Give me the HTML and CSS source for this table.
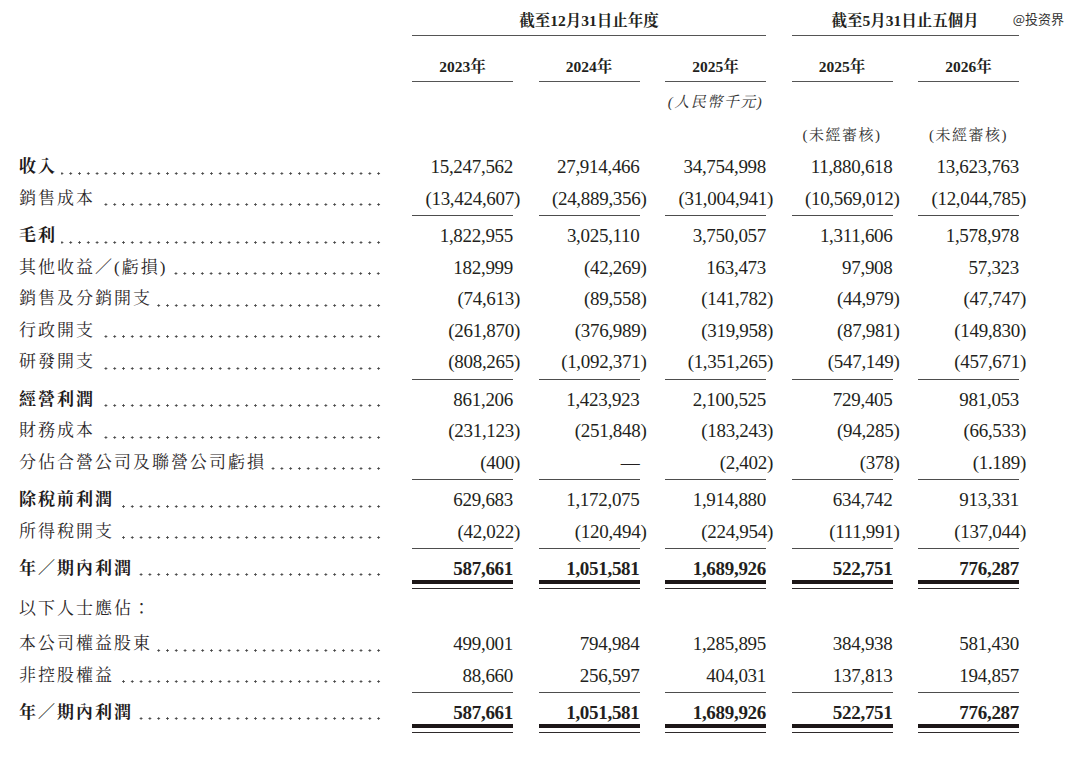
FILE: index.html
```html
<!DOCTYPE html>
<html lang="zh-Hant">
<head>
<meta charset="utf-8">
<title>綜合損益表</title>
<link rel="stylesheet" href="styles.css">
</head>
<body>
<div class="sheet">
  <div class="wm">@投资界</div>

  <div class="row hdr-a">
    <div></div>
    <div class="grp g1">截至12月31日止年度</div>
    <div class="grp g2">截至5月31日止五個月</div>
  </div>
  <div class="row hdr-b">
    <div></div>
    <div class="yr">2023年</div>
    <div class="yr">2024年</div>
    <div class="yr">2025年</div>
    <div class="yr">2025年</div>
    <div class="yr">2026年</div>
  </div>
  <div class="row hdr-c">
    <div></div><div></div><div></div>
    <div class="unit">(人民幣千元)</div>
    <div></div><div></div>
  </div>
  <div class="row hdr-d">
    <div></div><div></div><div></div><div></div>
    <div class="aud">(未經審核)</div>
    <div class="aud">(未經審核)</div>
  </div>

  <div class="body">
    <div class="row"><div class="lbl b"><span>收入</span><i class="dots"></i></div><div class="num">15,247,562</div><div class="num">27,914,466</div><div class="num">34,754,998</div><div class="num">11,880,618</div><div class="num">13,623,763</div></div>
    <div class="row"><div class="lbl"><span>銷售成本</span><i class="dots"></i></div><div class="num"><span class="neg">(13,424,607)</span></div><div class="num"><span class="neg">(24,889,356)</span></div><div class="num"><span class="neg">(31,004,941)</span></div><div class="num"><span class="neg">(10,569,012)</span></div><div class="num"><span class="neg">(12,044,785)</span></div></div>
    <div class="row rule"><div></div><div class="ln"></div><div class="ln"></div><div class="ln"></div><div class="ln"></div><div class="ln"></div></div>

    <div class="row"><div class="lbl b"><span>毛利</span><i class="dots"></i></div><div class="num">1,822,955</div><div class="num">3,025,110</div><div class="num">3,750,057</div><div class="num">1,311,606</div><div class="num">1,578,978</div></div>
    <div class="row"><div class="lbl"><span>其他收益／(虧損)</span><i class="dots"></i></div><div class="num">182,999</div><div class="num"><span class="neg">(42,269)</span></div><div class="num">163,473</div><div class="num">97,908</div><div class="num">57,323</div></div>
    <div class="row"><div class="lbl"><span>銷售及分銷開支</span><i class="dots"></i></div><div class="num"><span class="neg">(74,613)</span></div><div class="num"><span class="neg">(89,558)</span></div><div class="num"><span class="neg">(141,782)</span></div><div class="num"><span class="neg">(44,979)</span></div><div class="num"><span class="neg">(47,747)</span></div></div>
    <div class="row"><div class="lbl"><span>行政開支</span><i class="dots"></i></div><div class="num"><span class="neg">(261,870)</span></div><div class="num"><span class="neg">(376,989)</span></div><div class="num"><span class="neg">(319,958)</span></div><div class="num"><span class="neg">(87,981)</span></div><div class="num"><span class="neg">(149,830)</span></div></div>
    <div class="row"><div class="lbl"><span>研發開支</span><i class="dots"></i></div><div class="num"><span class="neg">(808,265)</span></div><div class="num"><span class="neg">(1,092,371)</span></div><div class="num"><span class="neg">(1,351,265)</span></div><div class="num"><span class="neg">(547,149)</span></div><div class="num"><span class="neg">(457,671)</span></div></div>
    <div class="row rule"><div></div><div class="ln"></div><div class="ln"></div><div class="ln"></div><div class="ln"></div><div class="ln"></div></div>

    <div class="row"><div class="lbl b"><span>經營利潤</span><i class="dots"></i></div><div class="num">861,206</div><div class="num">1,423,923</div><div class="num">2,100,525</div><div class="num">729,405</div><div class="num">981,053</div></div>
    <div class="row"><div class="lbl"><span>財務成本</span><i class="dots"></i></div><div class="num"><span class="neg">(231,123)</span></div><div class="num"><span class="neg">(251,848)</span></div><div class="num"><span class="neg">(183,243)</span></div><div class="num"><span class="neg">(94,285)</span></div><div class="num"><span class="neg">(66,533)</span></div></div>
    <div class="row"><div class="lbl"><span>分佔合營公司及聯營公司虧損</span><i class="dots"></i></div><div class="num"><span class="neg">(400)</span></div><div class="num">—</div><div class="num"><span class="neg">(2,402)</span></div><div class="num"><span class="neg">(378)</span></div><div class="num"><span class="neg">(1.189)</span></div></div>
    <div class="row rule"><div></div><div class="ln"></div><div class="ln"></div><div class="ln"></div><div class="ln"></div><div class="ln"></div></div>

    <div class="row"><div class="lbl b"><span>除稅前利潤</span><i class="dots"></i></div><div class="num">629,683</div><div class="num">1,172,075</div><div class="num">1,914,880</div><div class="num">634,742</div><div class="num">913,331</div></div>
    <div class="row"><div class="lbl"><span>所得稅開支</span><i class="dots"></i></div><div class="num"><span class="neg">(42,022)</span></div><div class="num"><span class="neg">(120,494)</span></div><div class="num"><span class="neg">(224,954)</span></div><div class="num"><span class="neg">(111,991)</span></div><div class="num"><span class="neg">(137,044)</span></div></div>
    <div class="row rule"><div></div><div class="ln"></div><div class="ln"></div><div class="ln"></div><div class="ln"></div><div class="ln"></div></div>

    <div class="row total"><div class="lbl b"><span>年／期內利潤</span><i class="dots"></i></div><div class="num">587,661</div><div class="num">1,051,581</div><div class="num">1,689,926</div><div class="num">522,751</div><div class="num">776,287</div></div>
    <div class="row dbl"><div></div><div class="dl"></div><div class="dl"></div><div class="dl"></div><div class="dl"></div><div class="dl"></div></div>

    <div class="row sub"><div class="lbl"><span>以下人士應佔：</span></div></div>
    <div class="row"><div class="lbl"><span>本公司權益股東</span><i class="dots"></i></div><div class="num">499,001</div><div class="num">794,984</div><div class="num">1,285,895</div><div class="num">384,938</div><div class="num">581,430</div></div>
    <div class="row"><div class="lbl"><span>非控股權益</span><i class="dots"></i></div><div class="num">88,660</div><div class="num">256,597</div><div class="num">404,031</div><div class="num">137,813</div><div class="num">194,857</div></div>
    <div class="row rule"><div></div><div class="ln"></div><div class="ln"></div><div class="ln"></div><div class="ln"></div><div class="ln"></div></div>

    <div class="row total"><div class="lbl b"><span>年／期內利潤</span><i class="dots"></i></div><div class="num">587,661</div><div class="num">1,051,581</div><div class="num">1,689,926</div><div class="num">522,751</div><div class="num">776,287</div></div>
    <div class="row dbl"><div></div><div class="dl"></div><div class="dl"></div><div class="dl"></div><div class="dl"></div><div class="dl"></div></div>
  </div>
</div>
</body>
</html>
```

FILE: styles.css
```css
html, body {
  margin: 0;
  padding: 0;
  background: #ffffff;
}

body {
  width: 1080px;
  height: 759px;
  overflow: hidden;
  color: #231f20;
  font-family: "Liberation Serif", "Noto Serif CJK TC", "Noto Sans CJK TC", serif;
}

.sheet {
  position: relative;
  padding-left: 19px;
}

.wm {
  position: absolute;
  top: 10px;
  right: 16px;
  font-family: "Noto Sans CJK SC", "Noto Sans", sans-serif;
  font-size: 13px;
  line-height: 18px;
  color: #333;
}

.row {
  display: grid;
  grid-template-columns: 367.5px repeat(5, 101px);
  column-gap: 25.5px;
  height: 31.5px;
  line-height: 31.5px;
}

/* header */
.hdr-a {
  height: auto;
  line-height: 28px;
  padding-top: 7px;
}
.grp {
  text-align: center;
  font-weight: 700;
  font-size: 15.5px;
  border-bottom: 1.5px solid #555;
}
.g1 { grid-column: 2 / span 3; }
.g2 { grid-column: 5 / span 2; }

.hdr-b {
  height: auto;
  line-height: 28px;
  margin-top: 16.5px;
}
.yr {
  text-align: center;
  font-weight: 700;
  font-size: 15.5px;
  border-bottom: 1.5px solid #555;
}

.hdr-c {
  height: 28px;
  line-height: 28px;
  padding-top: 6.5px;
}
.unit {
  text-align: center;
  font-style: italic;
  font-size: 15px;
  letter-spacing: 1.5px;
  color: #333;
}

.hdr-d {
  height: 28px;
  line-height: 28px;
  margin-top: 5px;
}
.aud {
  text-align: center;
  font-size: 15px;
  letter-spacing: 1.5px;
  color: #333;
}

/* body */
.body {
  padding-top: 2.25px;
}

.lbl {
  display: flex;
  align-items: center;
  padding-right: 3.5px;
  font-size: 17px;
  letter-spacing: 2px;
  white-space: nowrap;
  color: #2a2627;
}
.lbl.b {
  font-weight: 700;
  color: #1e1a1b;
}

.dots {
  flex: 1;
  height: 3px;
  margin-left: 4px;
  margin-top: 12px;
  background-image: radial-gradient(circle, #444 0.9px, rgba(255,255,255,0) 1.4px);
  background-size: 8.8px 3px;
  background-repeat: repeat-x;
  background-position: right center;
}

.num {
  text-align: right;
  font-size: 19px;
  letter-spacing: -0.3px;
  white-space: nowrap;
}
.neg {
  margin-right: -7px;
}

.rule {
  height: 6px;
}
.ln {
  margin-top: 1px;
  height: 0;
  border-top: 1.5px solid #4d4d4d;
}

.total {
  height: 27px;
  line-height: 31px;
}
.total .lbl {
  align-items: flex-start;
}
.total .dots {
  margin-top: 20px;
}
.total .num {
  font-weight: 700;
}

.dbl {
  height: 10px;
}
.dl {
  height: 4px;
  border-top: 4.5px solid #1c1617;
  border-bottom: 1.5px solid #2e2a2b;
}

.sub {
  height: 38px;
  line-height: 38px;
}
```
